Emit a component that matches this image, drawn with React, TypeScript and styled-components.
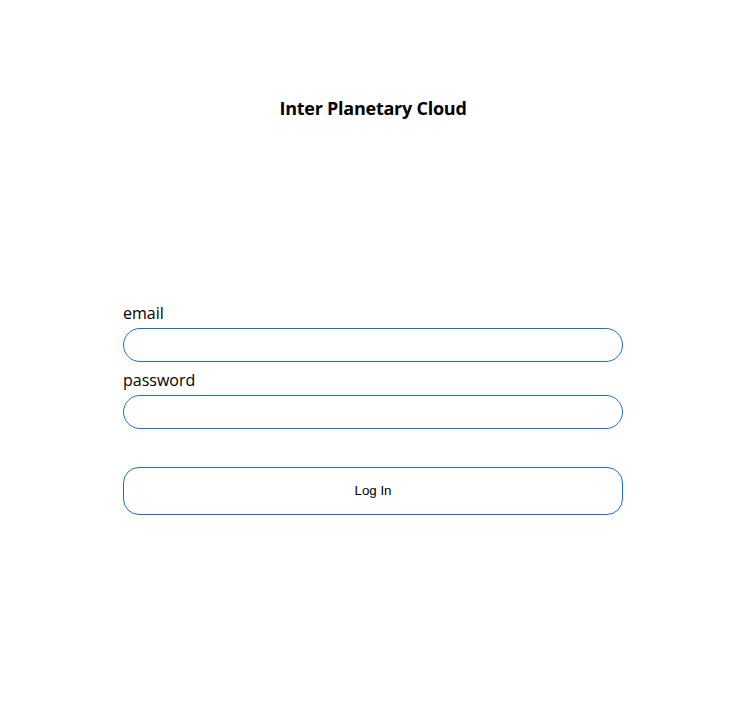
import React from "react";
import styled, { createGlobalStyle } from "styled-components";

const Global = createGlobalStyle`
  html, body { margin: 0; padding: 0; background: #ffffff; }
  body { font-family: "Open Sans", "Noto Sans", sans-serif; color: #000; }
`;

const Page = styled.div`
  display: flex;
  flex-direction: column;
  align-items: center;
  min-height: 713px;
  padding-right: 8px;
`;

const Title = styled.h1`
  margin: 96px 0 0;
  font-size: 18px;
  line-height: 24px;
  font-weight: 700;
  letter-spacing: -0.25px;
`;

const Form = styled.form`
  display: flex;
  flex-direction: column;
  width: 500px;
  margin-top: 180px;
`;

const Label = styled.label`
  display: block;
  font-size: 16px;
  line-height: 22px;
  margin: 2px 0 4px;
`;

const Field = styled.div<{ $first?: boolean }>`
  display: flex;
  flex-direction: column;
  margin-top: ${(p) => (p.$first ? "0" : "5px")};
`;

const Input = styled.input`
  box-sizing: border-box;
  width: 500px;
  height: 34px;
  border: 1px solid #1a6fcf;
  border-radius: 17px;
  padding: 0 14px;
  font-size: 14px;
  outline: none;
  background: #fff;
`;

const Button = styled.button`
  box-sizing: border-box;
  margin-top: 38px;
  width: 500px;
  height: 48px;
  padding: 0 0 1px;
  border: 1px solid #1a6fcf;
  border-radius: 16px;
  background: #fff;
  font-family: "Liberation Sans", Arial, sans-serif;
  font-size: 13.33px;
  color: #000;
  cursor: pointer;
`;

export default function App() {
  return (
    <>
      <Global />
      <Page>
        <Title>Inter Planetary Cloud</Title>
        <Form onSubmit={(e) => e.preventDefault()}>
          <Field $first>
            <Label htmlFor="email">email</Label>
            <Input id="email" type="email" />
          </Field>
          <Field>
            <Label htmlFor="password">password</Label>
            <Input id="password" type="password" />
          </Field>
          <Button type="submit">Log In</Button>
        </Form>
      </Page>
    </>
  );
}
